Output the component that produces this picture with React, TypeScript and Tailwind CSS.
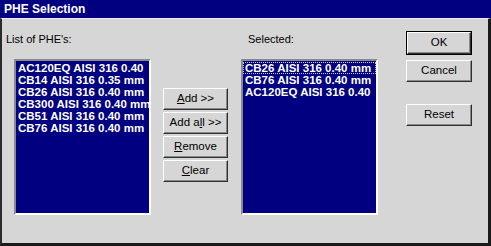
const available = [
  'AC120EQ AISI 316 0.40',
  'CB14 AISI 316 0.35 mm',
  'CB26 AISI 316 0.40 mm',
  'CB300 AISI 316 0.40 mm',
  'CB51 AISI 316 0.40 mm',
  'CB76 AISI 316 0.40 mm',
];

const selected = ['CB26 AISI 316 0.40 mm', 'CB76 AISI 316 0.40 mm', 'AC120EQ AISI 316 0.40'];

const Btn = ({ children, w = 'w-[65px]', extra = '' }: { children: React.ReactNode; w?: string; extra?: string }) => (
  <div
    className={`${w} h-[22px] flex items-center justify-center text-[11.5px] text-black bg-[#d6d6d6] border border-t-white border-l-white border-b-[#303030] border-r-[#303030] shadow-[inset_-1px_-1px_0_#8a8a8a] ${extra}`}
  >
    {children}
  </div>
);

const ListBox = ({ items, focusFirst }: { items: string[]; focusFirst?: boolean }) => (
  <div className="w-[137px] h-[156px] pt-[1px] bg-[#000080] border-2 border-t-[#8a8a8a] border-l-[#8a8a8a] border-b-white border-r-white overflow-hidden">
    {items.map((it, i) => (
      <div
        key={it}
        className={`h-[12px] leading-[12px] pl-[2px] text-[11.5px] font-bold text-white whitespace-nowrap ${
          focusFirst && i === 0 ? 'outline outline-1 outline-dotted outline-[#c8c8c8] -outline-offset-1' : ''
        }`}
      >
        {it}
      </div>
    ))}
  </div>
);

export default function App() {
  return (
    <div className="w-[491px] h-[246px] flex flex-col bg-[#d6d6d6] font-['Liberation_Sans',Arial,sans-serif]">
      {/* title bar */}
      <div className="h-[18px] bg-[#000080] text-white font-bold text-[12px] leading-[18px] pl-[4px]">
        PHE Selection
      </div>

      <div className="flex-1 flex items-start pl-[4px] pt-[12px] border-t border-t-[#eeeeee] border-l-2 border-l-[#2a2a2a] border-r-[3px] border-r-[#1a1a1a] border-b-[3px] border-b-[#1a1a1a]">
        {/* available list */}
        <div className="flex flex-col mt-[2px]">
          <div className="h-[13px] leading-[13px] text-[11px] text-black">List of PHE's:</div>
          <div className="ml-[8px] mt-[13px]">
            <ListBox items={available} />
          </div>
        </div>

        {/* move buttons */}
        <div className="ml-[12px] mt-[57px] flex flex-col gap-[2px]">
          <Btn>
            <span><u>A</u>dd &gt;&gt;</span>
          </Btn>
          <Btn>
            <span>Add a<u>l</u>l &gt;&gt;</span>
          </Btn>
          <Btn>
            <span><u>R</u>emove</span>
          </Btn>
          <Btn>
            <span><u>C</u>lear</span>
          </Btn>
        </div>

        {/* selected list */}
        <div className="ml-[13px] flex flex-col mt-[2px]">
          <div className="h-[13px] leading-[13px] text-[11px] text-black pl-[7px]">Selected:</div>
          <div className="mt-[13px]">
            <ListBox items={selected} focusFirst />
          </div>
        </div>

        {/* dialog buttons */}
        <div className="ml-[28px] flex flex-col">
          <div className="border border-black">
            <Btn w="w-[64px]">OK</Btn>
          </div>
          <div className="mt-[5px]">
            <Btn w="w-[66px]">Cancel</Btn>
          </div>
          <div className="mt-[22px]">
            <Btn w="w-[66px]">Reset</Btn>
          </div>
        </div>
      </div>
    </div>
  );
}
